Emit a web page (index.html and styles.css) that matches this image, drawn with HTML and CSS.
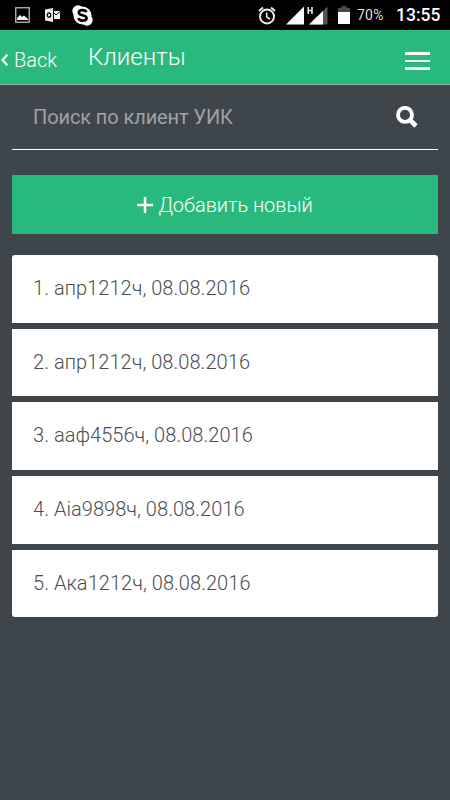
FILE: index.html
```
<!DOCTYPE html>
<html lang="ru">

<head>
    <meta charset="UTF-8">
    <meta name="viewport" content="width=device-width, initial-scale=1.0">
    <title>Клиенты</title>
    <link rel="stylesheet" href="styles.css">
</head>

<body>
    <div class="status-bar">
        <svg class="picture" width="15" height="16" viewBox="0 0 15 16">
            <rect x="0.75" y="0.75" width="13.5" height="14.5" fill="none" stroke="#bbb" stroke-width="1.3" />
            <path d="M2 13V11L5 8L7 10L9 8.5L13 12V13Z" fill="#fff" />
        </svg>
        <svg class="outlook" width="15" height="14" viewBox="0 0 15 14">
            <path d="M0 1.5L8 0V14L0 12.5Z" fill="#eee" />
            <path d="M9 3H15V11H9Z" fill="#eee" />
            <ellipse cx="4" cy="7" rx="1.7" ry="2.2" fill="none" stroke="#000" stroke-width="1.3" />
            <path d="M9 5L11 7L15 3.5" fill="none" stroke="#000" />
        </svg>
        <svg class="skype" width="21" height="21" viewBox="0 0 21 21">
            <circle cx="6" cy="6" r="5.7" fill="#fff" />
            <circle cx="15" cy="15" r="5.7" fill="#fff" />
            <circle cx="10.5" cy="10.5" r="9" fill="#fff" />
            <path d="M14.3 7.2C13.5 4.5 6.8 4.3 6.8 7.7C6.8 11.2 14.6 9.3 14.6 13C14.6 16.5 7.2 16.5 6.3 13.2" fill="none" stroke="#000" stroke-width="2.6" />
        </svg>
        <svg class="alarm" width="18" height="19" viewBox="0 0 18 19">
            <circle cx="9" cy="10.5" r="7" fill="none" stroke="#eee" stroke-width="1.9" />
            <path d="M1 5L5 1.5M17 5L13 1.5" stroke="#eee" stroke-width="1.9" />
            <path d="M8.7 6.5V11L12 13" fill="none" stroke="#eee" stroke-width="1.5" />
        </svg>
        <svg class="signal" width="42" height="19" viewBox="0 0 42 19">
            <path d="M0 18.500L18 0.500V18.500Z" fill="#fff" />
            <path d="M23 18.500L41.500 0.500V18.500Z" fill="#555" />
            <path d="M23 18.500L37 5V18.500Z" fill="#fff" />
            <path d="M22.200 1V8M26 1V8M22.200 4.500H26" stroke="#eee" stroke-width="1.500" />
        </svg>
        <svg class="battery" width="12" height="18" viewBox="0 0 12 18">
            <path d="M3.5 0H8.5V2H12V7H0V2H3.5Z" fill="#4a4a4a" />
            <path d="M0 6H12V18H0Z" fill="#fff" />
        </svg>
        <span class="percent">70%</span>
        <span class="time">13:55</span>
    </div>

    <div class="header">
        <a class="back">
            <svg width="9" height="14" viewBox="0 0 9 14">
                <path d="M7.3 1.7L2.5 7L7.3 12.3" fill="none" stroke="#fff" stroke-width="2.2" />
            </svg>
            <span>Back</span>
        </a>
        <h1>Клиенты</h1>
        <div class="menu">
            <i></i>
            <i></i>
            <i></i>
        </div>
    </div>

    <div class="content">
        <div class="search">
            <span>Поиск по клиент УИК</span>
            <svg width="22" height="22" viewBox="0 0 22 22">
                <circle cx="9" cy="8.9" r="7" fill="none" stroke="#fff" stroke-width="3.9" />
                <path d="M13.5 13.5L20 20" stroke="#fff" stroke-width="4.6" />
            </svg>
        </div>

        <div class="add-button">
            <svg width="16" height="16" viewBox="0 0 16 16">
                <path d="M8 0V16M0 8H16" stroke="#fff" stroke-width="2.5" />
            </svg>
            <span>Добавить новый</span>
        </div>

        <div class="list">
            <div class="item"><span>1. апр1212ч, 08.08.2016</span></div>
            <div class="item"><span>2. апр1212ч, 08.08.2016</span></div>
            <div class="item"><span>3. ааф4556ч, 08.08.2016</span></div>
            <div class="item"><span>4. Aia9898ч, 08.08.2016</span></div>
            <div class="item"><span>5. Ака1212ч, 08.08.2016</span></div>
        </div>
    </div>
</body>

</html>
```
FILE: styles.css
```
html,
body {
    height: 100%;
    margin: 0;
    padding: 0;
}

body {
    background: #3e464c;
    color: #fff;
    font-family: Roboto, sans-serif;
    font-weight: 300;
    overflow: hidden;
}

svg {
    display: block;
    flex: none;
}

.status-bar {
    display: flex;
    align-items: center;
    height: 30px;
    padding: 0 10px 0 15px;
    box-sizing: border-box;
    background: #000;
}

.outlook {
    margin-left: 15px;
}

.skype {
    margin-left: 12px;
}

.alarm {
    margin-left: auto;
}

.signal {
    margin-left: 10px;
}

.battery {
    margin-left: 10px;
}

.percent {
    width: 27px;
    margin-left: 7px;
    font-size: 14px;
    font-weight: 400;
    letter-spacing: 0.2px;
    color: #ddd;
}

.time {
    width: 44px;
    margin-left: 12px;
    font-size: 17.5px;
    font-weight: 500;
}

.header {
    display: flex;
    height: 55px;
    box-sizing: border-box;
    background: #2ab97d;
    border-bottom: 1px solid #8fb5a6;
}

.back {
    display: flex;
    align-items: center;
    width: 88px;
    height: 59px;
    font-size: 20px;
}

.back span {
    margin-left: 5px;
}

.header h1 {
    margin: 0;
    font-size: 24px;
    font-weight: 300;
    line-height: 54px;
}

.menu {
    display: flex;
    flex-direction: column;
    gap: 5px;
    width: 25px;
    margin: 22px 20px 0 auto;
}

.menu i {
    height: 2.5px;
    background: #fff;
}

.content {
    padding: 0 12px;
}

.search {
    display: flex;
    align-items: center;
    justify-content: space-between;
    height: 65px;
    padding: 0 20px 0 21px;
    box-sizing: border-box;
    border-bottom: 1px solid #fff;
    font-size: 20px;
    font-weight: 400;
    letter-spacing: -0.1px;
    color: #a0a2a3;
}

.add-button {
    display: flex;
    align-items: center;
    justify-content: center;
    gap: 5px;
    height: 59px;
    margin-top: 25px;
    background: #2ab97d;
    font-size: 20px;
    line-height: 25px;
}

.add-button span {
    padding-top: 1px;
    letter-spacing: -0.05px;
}

.list {
    display: flex;
    flex-direction: column;
    gap: 6.2px;
    margin-top: 21px;
    border-radius: 3px;
    overflow: hidden;
}

.item {
    height: 67.5px;
    padding-left: 21px;
    background: #fff;
    color: #4a4e52;
    font-size: 20px;
    line-height: 67px;
    letter-spacing: 0.05px;
}
```
